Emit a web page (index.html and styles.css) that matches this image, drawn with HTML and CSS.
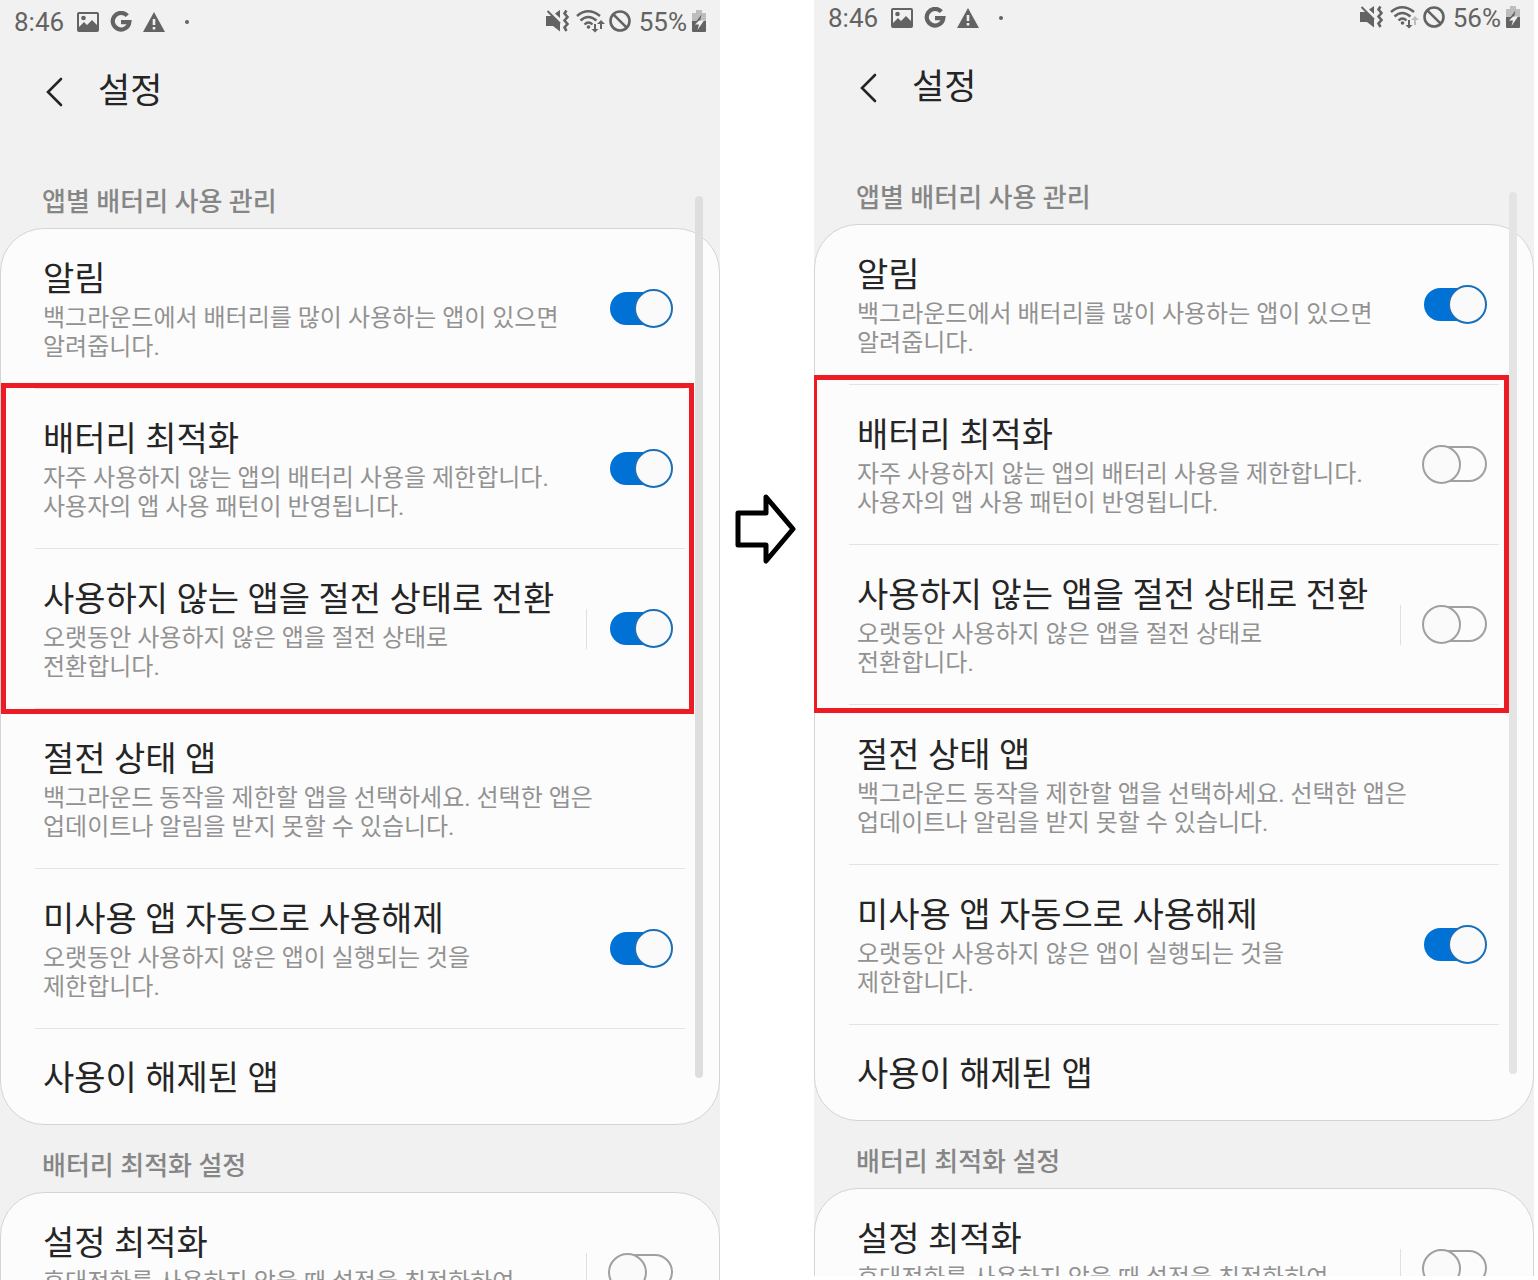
FILE: index.html
```html
<!DOCTYPE html>
<html lang="ko">

<head>
    <meta charset="UTF-8">
    <meta name="viewport" content="width=device-width, initial-scale=1.0">
    <title>앱별 배터리 사용 관리</title>
    <link rel="stylesheet" href="styles.css">
</head>

<body>
    <!-- Shared icons -->
    <svg class="sprite" aria-hidden="true">
        <symbol id="icon-picture" viewBox="0 0 22 22">
            <path fill-rule="evenodd" d="M2 1H20Q22 1 22 3V19Q22 21 20 21H2Q0 21 0 19V3Q0 1 2 1ZM2 3V16L7 11L10 14L15 9L20 14V3Z" />
            <circle cx="6.500" cy="7" r="2.300" />
        </symbol>
        <symbol id="icon-google" viewBox="0 0 22 22">
            <path d="M17.300 4.700A8.300 8.300 0 1 0 19.300 11.200H11" fill="none" stroke="currentColor" stroke-width="4.200" />
        </symbol>
        <symbol id="icon-warning" viewBox="0 0 22 22">
            <path fill-rule="evenodd" d="M11 1L22 21H0ZM9.700 8V14H12.300V8ZM9.700 16V18.500H12.300V16Z" />
        </symbol>
        <symbol id="icon-mute" viewBox="0 0 24 24">
            <path d="M0 7H6L14 14.500V22.500L7 17H0ZM9 4.500L14 1V9Z" />
            <path d="M1.500 2L14 14.500" fill="none" stroke="currentColor" stroke-width="2" />
            <path d="M20.500 1.500L18.500 4.500L21.500 8L18.500 11.500L21.500 15L18.500 18.500L20.500 22" fill="none" stroke="currentColor" stroke-width="2.600" />
        </symbol>
        <symbol id="icon-wifi" viewBox="0 0 30 24">
            <g fill="none" stroke="currentColor" stroke-width="2.400">
                <path d="M1 7Q12 -2.500 24 7" />
                <path d="M4.500 11.500Q12 4.500 20.500 11.500" />
                <path d="M8.500 15.500Q12.500 11.500 16.500 15.500" />
            </g>
            <circle cx="12.500" cy="18" r="1.800" />
            <path d="M18 15H20V20H22.500L19 23.500L15.500 20H18Z" />
        </symbol>
        <symbol id="icon-block" viewBox="0 0 22 22">
            <g fill="none" stroke="currentColor" stroke-width="2.600">
                <circle cx="11" cy="11" r="9.500" />
                <path d="M4.300 4.300L17.700 17.700" />
            </g>
        </symbol>
        <symbol id="icon-battery" viewBox="0 0 14 22">
            <path d="M4 0H10V3H14V12H0V3H4Z" fill="#bdbdbd" />
            <path d="M0 11H14V21Q14 22 13 22H1Q0 22 0 21Z" />
            <path d="M9.500 4.500L3 13H8L8.500 9Z" />
            <path d="M7 10.500H12L5.500 20L7 14.500H3Z" fill="#f1f1f1" />
        </symbol>
        <symbol id="icon-back" viewBox="0 0 18 30">
            <path d="M16 2L3 15L16 28" fill="none" stroke="currentColor" stroke-width="2.600" stroke-linecap="round" />
        </symbol>
    </svg>

    <main class="comparison">
        <section class="phone before">
            <div class="status-bar">
                <span class="time">8:46</span>
                <svg class="icon"><use href="#icon-picture" /></svg>
                <svg class="icon"><use href="#icon-google" /></svg>
                <svg class="icon"><use href="#icon-warning" /></svg>
                <span class="more-dot"></span>
                <div class="status-right">
                    <svg class="icon-mute"><use href="#icon-mute" /></svg>
                    <svg class="icon-wifi"><use href="#icon-wifi" /><path d="M24 20V15H21L25 11L29 15H26V20Z" /></svg>
                    <svg class="icon"><use href="#icon-block" /></svg>
                    <span class="percent">55%</span>
                    <svg class="icon-battery"><use href="#icon-battery" /></svg>
                </div>
            </div>

            <header class="header">
                <button class="back-button" aria-label="뒤로"><svg><use href="#icon-back" /></svg></button>
                <h1>설정</h1>
            </header>

            <h2 class="section-title">앱별 배터리 사용 관리</h2>
            <div class="card">
                <div class="row">
                    <label class="row-text" for="alert-before">
                        <span class="row-title">알림</span>
                        <span class="row-desc">백그라운드에서 배터리를 많이 사용하는 앱이 있으면<br>알려줍니다.</span>
                    </label>
                    <input type="checkbox" class="toggle" id="alert-before" checked>
                </div>
                <div class="highlight">
                    <div class="row">
                        <label class="row-text" for="optimize-before">
                            <span class="row-title">배터리 최적화</span>
                            <span class="row-desc">자주 사용하지 않는 앱의 배터리 사용을 제한합니다.<br>사용자의 앱 사용 패턴이 반영됩니다.</span>
                        </label>
                        <input type="checkbox" class="toggle" id="optimize-before" checked>
                    </div>
                    <div class="row split">
                        <label class="row-text" for="sleep-before">
                            <span class="row-title">사용하지 않는 앱을 절전 상태로 전환</span>
                            <span class="row-desc">오랫동안 사용하지 않은 앱을 절전 상태로<br>전환합니다.</span>
                        </label>
                        <input type="checkbox" class="toggle" id="sleep-before" checked>
                    </div>
                </div>
                <a class="row" href="#">
                    <span class="row-text">
                        <span class="row-title">절전 상태 앱</span>
                        <span class="row-desc">백그라운드 동작을 제한할 앱을 선택하세요. 선택한 앱은<br>업데이트나 알림을 받지 못할 수 있습니다.</span>
                    </span>
                </a>
                <div class="row">
                    <label class="row-text" for="disable-before">
                        <span class="row-title">미사용 앱 자동으로 사용해제</span>
                        <span class="row-desc">오랫동안 사용하지 않은 앱이 실행되는 것을<br>제한합니다.</span>
                    </label>
                    <input type="checkbox" class="toggle" id="disable-before" checked>
                </div>
                <a class="row short" href="#">
                    <span class="row-title">사용이 해제된 앱</span>
                </a>
            </div>

            <h2 class="section-title next">배터리 최적화 설정</h2>
            <div class="card">
                <div class="row split">
                    <label class="row-text" for="settings-before">
                        <span class="row-title">설정 최적화</span>
                        <span class="row-desc">휴대전화를 사용하지 않을 때 설정을 최적화하여</span>
                    </label>
                    <input type="checkbox" class="toggle" id="settings-before">
                </div>
            </div>
            <div class="scrollbar"></div>
        </section>

        <div class="arrow">
            <svg viewBox="0 0 64 72">
                <path d="M3 20H31V4L58 36L31 68V52H3Z" fill="none" stroke="#000" stroke-width="5" stroke-linejoin="round" />
            </svg>
        </div>

        <section class="phone after">
            <div class="status-bar">
                <span class="time">8:46</span>
                <svg class="icon"><use href="#icon-picture" /></svg>
                <svg class="icon"><use href="#icon-google" /></svg>
                <svg class="icon"><use href="#icon-warning" /></svg>
                <span class="more-dot"></span>
                <div class="status-right">
                    <svg class="icon-mute"><use href="#icon-mute" /></svg>
                    <svg class="icon-wifi"><use href="#icon-wifi" /><path fill="#bdbdbd" d="M24 20V15H21L25 11L29 15H26V20Z" /></svg>
                    <svg class="icon"><use href="#icon-block" /></svg>
                    <span class="percent">56%</span>
                    <svg class="icon-battery"><use href="#icon-battery" /></svg>
                </div>
            </div>

            <header class="header">
                <button class="back-button" aria-label="뒤로"><svg><use href="#icon-back" /></svg></button>
                <h1>설정</h1>
            </header>

            <h2 class="section-title">앱별 배터리 사용 관리</h2>
            <div class="card">
                <div class="row">
                    <label class="row-text" for="alert-after">
                        <span class="row-title">알림</span>
                        <span class="row-desc">백그라운드에서 배터리를 많이 사용하는 앱이 있으면<br>알려줍니다.</span>
                    </label>
                    <input type="checkbox" class="toggle" id="alert-after" checked>
                </div>
                <div class="highlight">
                    <div class="row">
                        <label class="row-text" for="optimize-after">
                            <span class="row-title">배터리 최적화</span>
                            <span class="row-desc">자주 사용하지 않는 앱의 배터리 사용을 제한합니다.<br>사용자의 앱 사용 패턴이 반영됩니다.</span>
                        </label>
                        <input type="checkbox" class="toggle" id="optimize-after">
                    </div>
                    <div class="row split">
                        <label class="row-text" for="sleep-after">
                            <span class="row-title">사용하지 않는 앱을 절전 상태로 전환</span>
                            <span class="row-desc">오랫동안 사용하지 않은 앱을 절전 상태로<br>전환합니다.</span>
                        </label>
                        <input type="checkbox" class="toggle" id="sleep-after">
                    </div>
                </div>
                <a class="row" href="#">
                    <span class="row-text">
                        <span class="row-title">절전 상태 앱</span>
                        <span class="row-desc">백그라운드 동작을 제한할 앱을 선택하세요. 선택한 앱은<br>업데이트나 알림을 받지 못할 수 있습니다.</span>
                    </span>
                </a>
                <div class="row">
                    <label class="row-text" for="disable-after">
                        <span class="row-title">미사용 앱 자동으로 사용해제</span>
                        <span class="row-desc">오랫동안 사용하지 않은 앱이 실행되는 것을<br>제한합니다.</span>
                    </label>
                    <input type="checkbox" class="toggle" id="disable-after" checked>
                </div>
                <a class="row short" href="#">
                    <span class="row-title">사용이 해제된 앱</span>
                </a>
            </div>

            <h2 class="section-title next">배터리 최적화 설정</h2>
            <div class="card">
                <div class="row split">
                    <label class="row-text" for="settings-after">
                        <span class="row-title">설정 최적화</span>
                        <span class="row-desc">휴대전화를 사용하지 않을 때 설정을 최적화하여</span>
                    </label>
                    <input type="checkbox" class="toggle" id="settings-after">
                </div>
            </div>
            <div class="scrollbar"></div>
        </section>
    </main>
</body>

</html>
```
FILE: styles.css
```css
*,
*::before,
*::after {
    margin: 0;
    padding: 0;
    box-sizing: border-box;
}

body {
    background-color: #ffffff;
    color: #252525;
    font-family: Roboto, "Noto Sans CJK KR", sans-serif;
    height: 100vh;
    overflow: hidden;
}

.sprite {
    position: absolute;
    width: 0;
    height: 0;
}

.comparison {
    display: grid;
    grid-template-columns: 1fr 94px 1fr;
    padding-right: 4px;
}

.phone {
    position: relative;
    height: 100vh;
    overflow: hidden;
    background-color: #f1f1f1;
}

.phone.after {
    margin-top: -4px;
}

/* Status bar */
.status-bar {
    display: flex;
    align-items: center;
    height: 44px;
    padding: 0 14px;
    gap: 11px;
    color: #636363;
    font-size: 26px;
}

.status-bar svg {
    fill: currentColor;
    flex-shrink: 0;
}

.time {
    margin-right: 2px;
}

.icon {
    width: 22px;
    height: 22px;
}

.more-dot {
    width: 4px;
    height: 4px;
    margin-left: 9px;
    border-radius: 50%;
    background-color: #636363;
}

.status-right {
    display: flex;
    align-items: center;
    margin-left: auto;
    gap: 6px;
}

.icon-mute {
    width: 24px;
    height: 24px;
    margin-bottom: 2px;
}

.icon-wifi {
    width: 30px;
    height: 24px;
    margin: 0 -3px 2px 0;
}

.status-right .icon {
    margin-bottom: 2px;
}

.percent {
    margin: 0 -1px 0 2px;
}

.icon-battery {
    width: 14px;
    height: 22px;
    margin-bottom: 2px;
}

/* Header */
.header {
    display: flex;
    align-items: center;
    height: 96px;
    padding-left: 45px;
    gap: 35px;
}

.back-button {
    width: 18px;
    height: 30px;
    background: none;
    border: none;
    color: #252525;
    cursor: pointer;
}

.back-button svg {
    display: block;
    width: 18px;
    height: 30px;
}

h1 {
    font-size: 35px;
    font-weight: 400;
    line-height: 50px;
}

.section-title {
    padding: 44px 42px 8px;
    color: #868686;
    font-size: 26px;
    font-weight: 500;
    line-height: 36px;
}

.section-title.next {
    padding-top: 23px;
}

/* Cards */
.card {
    padding: 0 34px;
    border: 1px solid #d4d4d4;
    border-radius: 44px;
    background-color: #fcfcfc;
}

.row {
    display: flex;
    align-items: center;
    justify-content: space-between;
    height: 160px;
    padding: 0 12px 0 8px;
    border-bottom: 1px solid #e4e4e4;
    color: inherit;
    text-decoration: none;
    white-space: nowrap;
}

.row.short {
    align-items: flex-start;
    height: 95px;
    padding-top: 24px;
    border-bottom: none;
}

.row-text {
    padding-bottom: 2px;
}

.row-title {
    display: block;
    font-size: 34px;
    line-height: 50px;
}

.row-desc {
    display: block;
    min-height: 58px;
    color: #929292;
    font-size: 24px;
    line-height: 29px;
}

/* Red frame around the rows that change */
.highlight {
    position: relative;
}

.highlight::after {
    content: "";
    position: absolute;
    top: -6px;
    right: -9px;
    bottom: -5px;
    left: -34px;
    border: 5px solid #ed1c24;
    pointer-events: none;
}

.after .highlight::after {
    top: -10px;
    right: -10px;
    bottom: -8px;
    left: -35px;
    border-left-width: 3px;
}

/* Toggle */
.toggle {
    appearance: none;
    position: relative;
    flex-shrink: 0;
    width: 65px;
    height: 39px;
    cursor: pointer;
}

.toggle::before,
.toggle::after {
    content: "";
    position: absolute;
    border: 2px solid #a0a0a0;
}

.toggle::before {
    top: 1px;
    right: 0;
    width: 60px;
    height: 36px;
    border-radius: 18px;
}

.toggle::after {
    top: 0;
    left: 0;
    width: 39px;
    height: 39px;
    border-radius: 50%;
    background-color: #fafafa;
}

.toggle:checked::before {
    top: 3px;
    left: 2px;
    height: 33px;
    border-color: #0072d6;
    background-color: #0072d6;
}

.toggle:checked::after {
    left: 26px;
    border-color: #1a6fbd;
}

/* Rows with a line between the text and the toggle */
.split .row-text {
    flex: 1;
}

.split::after {
    content: "";
    order: 1;
    width: 1px;
    height: 40px;
    background-color: #e0e0e0;
}

.split .toggle {
    order: 2;
    margin-left: 21px;
}

.scrollbar {
    position: absolute;
    top: 196px;
    right: 17px;
    bottom: 202px;
    width: 8px;
    border-radius: 4px;
    background-color: #dedede;
}

.after .scrollbar {
    background-color: #e4e4e4;
}

.arrow {
    display: flex;
    justify-content: center;
    align-items: flex-start;
    padding-top: 493px;
}

.arrow svg {
    width: 64px;
    height: 72px;
}
```
